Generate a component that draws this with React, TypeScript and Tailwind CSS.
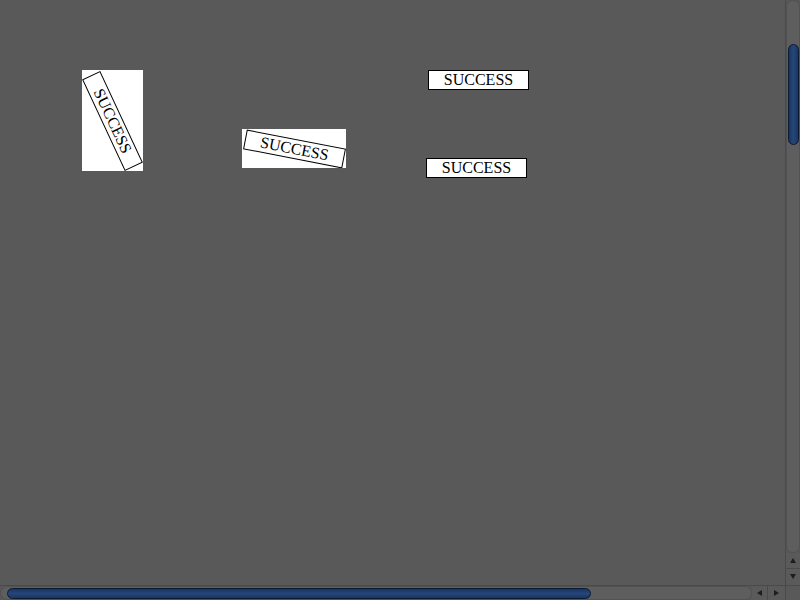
import React from "react";

type BoxProps = { rotate?: string };

function SuccessBox({ rotate = "" }: BoxProps) {
  return (
    <div
      className={`w-[101px] h-[20px] shrink-0 border border-black bg-white text-black text-center text-[16px] leading-[18px] ${rotate}`}
      style={{ fontFamily: '"Liberation Serif", "Times New Roman", serif' }}
    >
      SUCCESS
    </div>
  );
}

function Arrow({ dir }: { dir: "up" | "down" | "left" | "right" }) {
  const pts = {
    up: "4,1 7,6 1,6",
    down: "1,1 7,1 4,6",
    left: "1,4 6,1 6,7",
    right: "1,1 6,4 1,7",
  }[dir];
  return (
    <svg width="8" height="8" viewBox="0 0 8 8">
      <polygon points={pts} fill="#1e1e1e" />
    </svg>
  );
}

export default function App() {
  return (
    <div className="w-[800px] h-[600px] flex flex-col bg-[#595959] overflow-hidden">
      <div className="flex flex-1 min-h-0">
        {/* page content */}
        <div className="relative flex-1">
          <div className="absolute left-[82px] top-[70px] w-[61px] h-[101px] bg-white flex items-center justify-center">
            <SuccessBox rotate="rotate-[65deg]" />
          </div>
          <div className="absolute left-[242px] top-[129px] w-[104px] h-[39px] bg-white flex items-center justify-center">
            <SuccessBox rotate="rotate-[11deg]" />
          </div>
          <div className="absolute left-[428px] top-[70px]">
            <SuccessBox />
          </div>
          <div className="absolute left-[426px] top-[158px]">
            <SuccessBox />
          </div>
        </div>

        {/* vertical scrollbar */}
        <div className="w-[15px] flex flex-col bg-[#575757] border-l border-[#4a4a4a]">
          <div className="flex-1 rounded-b-[7px] rounded-t-[7px] bg-[#5e5e5e] border border-[#525252] flex flex-col items-center">
            <div className="mt-[43px] w-[11px] h-[101px] rounded-[6px] border border-[#0c1a33] bg-linear-to-r from-[#1a3560] via-[#26467a] to-[#1a3560]" />
          </div>
          <div className="h-[16px] flex items-center justify-center border-b border-[#4a4a4a] bg-[#5a5a5a]">
            <Arrow dir="up" />
          </div>
          <div className="h-[16px] flex items-center justify-center bg-[#5a5a5a]">
            <Arrow dir="down" />
          </div>
        </div>
      </div>

      {/* horizontal scrollbar */}
      <div className="h-[15px] flex bg-[#575757] border-t border-[#4a4a4a]">
        <div className="flex-1 flex items-center rounded-l-[7px] rounded-r-[7px] bg-[#5e5e5e] border border-[#525252]">
          <div className="ml-[6px] w-[584px] h-[11px] rounded-[6px] border border-[#0c1a33] bg-linear-to-b from-[#1a3560] via-[#26467a] to-[#1a3560]" />
        </div>
        <div className="w-[16px] flex items-center justify-center border-r border-[#4a4a4a] bg-[#5a5a5a]">
          <Arrow dir="left" />
        </div>
        <div className="w-[17px] flex items-center justify-center bg-[#5a5a5a]">
          <Arrow dir="right" />
        </div>
        <div className="w-[15px] bg-[#595959] border-l border-[#4a4a4a]" />
      </div>
    </div>
  );
}
